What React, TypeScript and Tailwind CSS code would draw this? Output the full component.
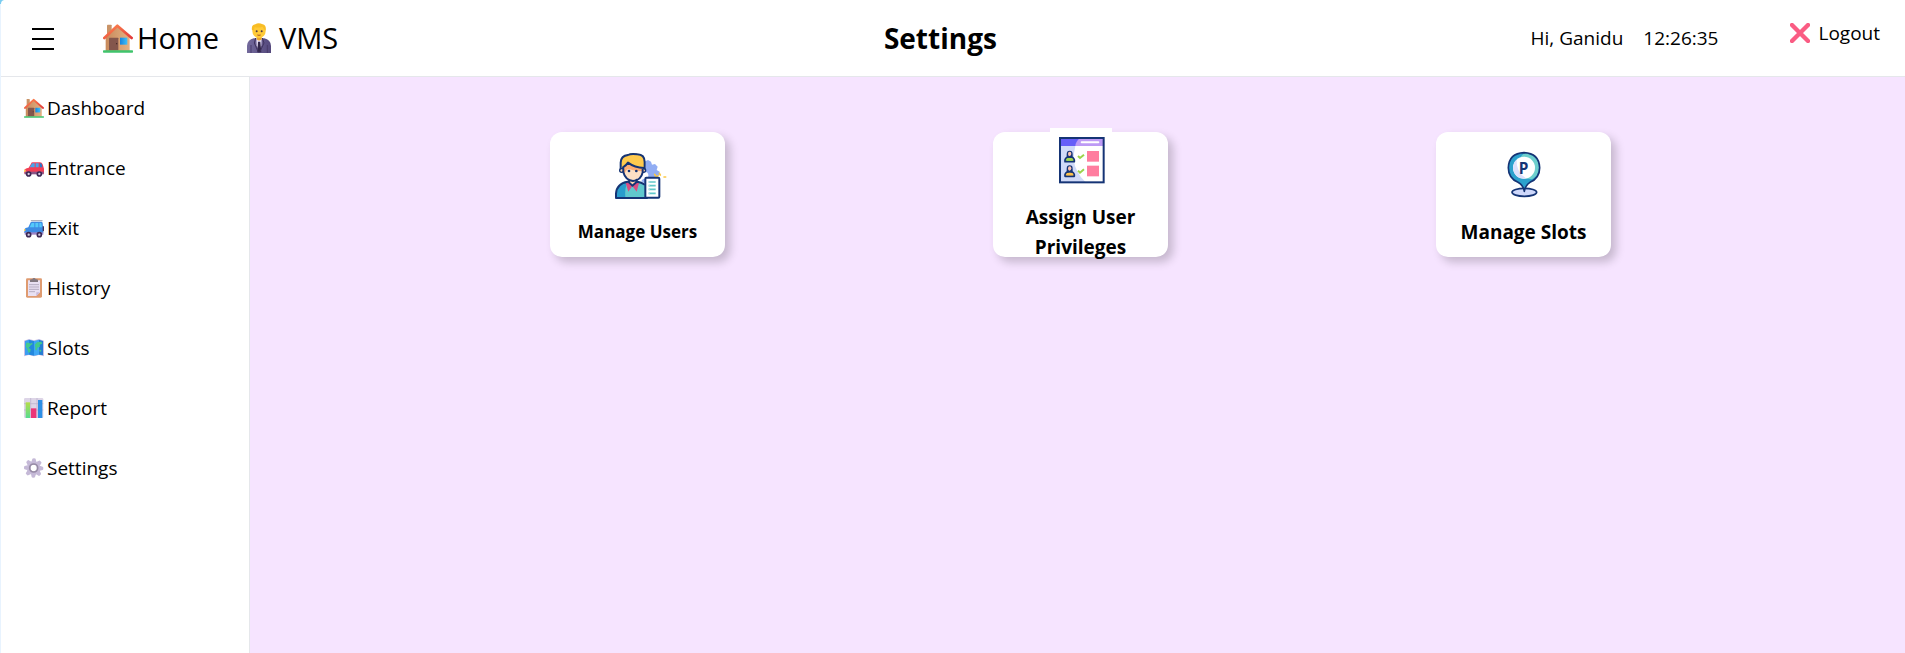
import React from "react";

type IconProps = { className?: string };

function HouseIcon({ className = "size-5" }: IconProps) {
  return (
    <svg viewBox="0 0 90 90" className={className} aria-hidden="true">
      <defs>
        <linearGradient id="wall" x1="0" x2="1">
          <stop offset="0" stopColor="#c88a5c" />
          <stop offset="1" stopColor="#e3b183" />
        </linearGradient>
        <linearGradient id="roof" x1="0" y1="0" x2="1" y2="1">
          <stop offset="0" stopColor="#ff8a50" />
          <stop offset="1" stopColor="#e23a3a" />
        </linearGradient>
        <linearGradient id="pane" x1="0" x2="1">
          <stop offset="0" stopColor="#1583dd" />
          <stop offset="1" stopColor="#3dc0fb" />
        </linearGradient>
      </defs>
      <rect x="12" y="5" width="14" height="30" rx="2" fill="#c99367" />
      <path d="M8 42 43 9l37 33v42H8z" fill="url(#wall)" />
      <rect x="18" y="44" width="28" height="38" rx="2" fill="#84564c" />
      <circle cx="41" cy="62" r="2" fill="#3b2322" />
      <rect x="51" y="44" width="22" height="21" fill="url(#pane)" />
      <path d="M4 45 43 8l43 37" fill="none" stroke="url(#roof)" strokeWidth="8" strokeLinecap="round" strokeLinejoin="round" />
      <rect x="0" y="82" width="90" height="7" rx="2" fill="#3fc46c" />
    </svg>
  );
}

function OfficeWorkerIcon({ className = "" }: IconProps) {
  return (
    <svg viewBox="0 0 72 90" className={className} aria-hidden="true">
      <defs>
        <linearGradient id="suit" x1="0" x2="1">
          <stop offset="0" stopColor="#736a9c" />
          <stop offset="1" stopColor="#54487c" />
        </linearGradient>
      </defs>
      <path d="M0 90V68q2-18 20-22h32q18 4 20 22v22z" fill="url(#suit)" />
      <path d="M28 45h16l-1 22-6 18-8-18z" fill="#e6ddf3" />
      <path d="M33 56h7l3 32H31z" fill="#33284b" />
      <path d="m26 45-4 15 12 28M46 45l5 15-13 28" fill="none" stroke="#40335f" strokeWidth="3" />
      <path d="M12 66v24M61 66v24" stroke="#493c6a" strokeWidth="3" />
      <path d="M29 36h15v13q-8 7-15 0z" fill="#eba52b" />
      <ellipse cx="36" cy="24" rx="20" ry="21" fill="#ffca37" />
      <path d="M15 22Q12 6 25 4q9-7 22 0 12 3 9 19l-5-4-4-8q-15 5-24 1l-2 10z" fill="#f8bd25" />
      <circle cx="29" cy="25" r="3" fill="#513a43" />
      <circle cx="44" cy="25" r="3" fill="#513a43" />
      <path d="M31 36q5 2 10 0" stroke="#a95224" strokeWidth="3" fill="none" />
    </svg>
  );
}

function RedCarIcon() {
  return (
    <svg viewBox="0 0 60 60" className="size-5" aria-hidden="true">
      <path d="M14 29 21 17q1-4 5-4h22q6 0 8 6l4 13v15H1V35q4-5 13-6z" fill="#f33e55" />
      <path d="m17 28 6-10q1-2 3-2h6v12zM35 16h9v12h-9z" fill="#47a6ed" />
      <path d="M47 16h3q4 0 5 12h-8z" fill="#267bcc" />
      <path d="M2 41h57v8H2z" fill="#8b5485" />
      <path d="M0 35h5v6H0z" fill="#ffd35b" />
      <g fill="#d6cbe3" stroke="#3c2853" strokeWidth="5">
        <circle cx="14" cy="48" r="6" />
        <circle cx="46" cy="48" r="6" />
      </g>
    </svg>
  );
}

function BlueCarIcon() {
  return (
    <svg viewBox="0 0 60 60" className="size-5" aria-hidden="true">
      <path d="M22 8h32" stroke="#aeb0bb" strokeWidth="4" strokeLinecap="round" />
      <path d="m13 28 7-15q1-2 4-2h28q3 0 4 4l2 30H1V34q2-5 12-6z" fill="#3e8be3" />
      <path d="m17 28 6-13h8v13zM34 15h9v13h-9zM46 15h6l2 13h-8z" fill="#54c9fa" />
      <path d="M56 25h4v15h-4z" fill="#41355e" />
      <path d="M2 43h56v7H2z" fill="#9c83c5" />
      <path d="M0 33h4v6H0z" fill="#ffd45d" />
      <g fill="#d6cbe3" stroke="#3c2853" strokeWidth="5">
        <circle cx="14" cy="50" r="6" />
        <circle cx="46" cy="50" r="6" />
      </g>
    </svg>
  );
}

function ClipboardIcon() {
  return (
    <svg viewBox="0 0 60 60" className="size-5" aria-hidden="true">
      <rect x="6" y="1" width="48" height="58" rx="4" fill="#df9b70" />
      <path d="M12 7h36v36L37 54H12z" fill="#e9e0f2" />
      <path d="M37 54V43h11z" fill="#c8b8d9" />
      <path d="M18 12V7q0-3 4-3h3q1-4 5-4t5 4h3q4 0 4 3v5z" fill="#81777f" />
      <path d="M15 20h30M15 27h30M15 34h30M15 41h18" stroke="#aca1b8" strokeWidth="2.5" />
    </svg>
  );
}

function MapIcon() {
  return (
    <svg viewBox="0 0 60 60" className="size-5" aria-hidden="true">
      <path d="m0 8 15-5 15 4 15-4 15 5v47l-15-4-15 4-15-4-15 4z" fill="#c9c0e5" />
      <path d="m3 9 12-4v45L3 52z" fill="#3b9df0" />
      <path d="m15 5 15 4v44l-15-3z" fill="#2388df" />
      <path d="m30 9 15-4v45l-15 3z" fill="#3ea7f5" />
      <path d="m45 5 12 4v43l-12-2z" fill="#267ed3" />
      <path d="M7 14h8l3 3 6-3 2 4-6 4-3 5-5 2 8 4-1 8-5 4-3-8-2-6-4-5zM32 20l7-7 13-2 3 6-8 3 1 6-8 3-1 8-5-1v-9z" fill="#43ca8c" />
      <circle cx="49" cy="38" r="3" fill="#43ca8c" />
    </svg>
  );
}

function BarChartIcon() {
  return (
    <svg viewBox="0 0 60 60" className="size-5" aria-hidden="true">
      <defs>
        <linearGradient id="green-bar" x1="0" y1="0" x2="0" y2="1">
          <stop offset="0" stopColor="#b5dd49" />
          <stop offset="1" stopColor="#56dc91" />
        </linearGradient>
      </defs>
      <rect width="58" height="60" rx="4" fill="#ddd5e7" />
      <path d="M20 0v60M39 0v60M0 17h58M0 36h58" stroke="#b9aec8" strokeWidth="2" />
      <rect x="5" y="13" width="13" height="47" fill="url(#green-bar)" />
      <rect x="21" y="31" width="16" height="29" fill="#ec3578" />
      <rect x="42" y="6" width="13" height="54" fill="#2d8fe5" />
    </svg>
  );
}

function GearIcon() {
  const teeth = [0, 45, 90, 135, 180, 225, 270, 315];
  return (
    <svg viewBox="0 0 60 60" className="size-5" aria-hidden="true">
      {teeth.map((angle) => (
        <path key={angle} d="M22 12 25 3q0-2 5-2t5 2l2 9z" fill="#c5b9d7" transform={`rotate(${angle} 29 30)`} />
      ))}
      <circle cx="29" cy="30" r="15" fill="none" stroke="#c5b9d7" strokeWidth="11" />
      <circle cx="29" cy="30" r="12" fill="none" stroke="#978ba5" strokeWidth="5" />
    </svg>
  );
}

function CrossIcon() {
  return (
    <svg viewBox="0 0 60 60" className="size-5" aria-hidden="true">
      <path d="m6 6 48 48M54 6 6 54" stroke="#fa5c83" strokeWidth="13" strokeLinecap="round" />
    </svg>
  );
}

function ManageUsersIcon() {
  return (
    <svg viewBox="0 0 186 186" className="size-[62px] shrink-0 bg-white" aria-hidden="true">
      <path d="m115 52 8-4 9 5 3 9 9-2 8 8-3 10 9 5-1 11-10 4v22h-32l-12-9 8-10-5-12 10-15z" fill="#91adf3" />
      <circle cx="113" cy="94" r="11" fill="#fff" />
      <path d="m143 91 3 5M157 88l3 5M153 95l-4 4M171 99h5" stroke="#fbc947" strokeWidth="5" strokeLinecap="round" />
      <path d="M27 162v-13q2-31 35-36l15-4 14 4q27 3 29 23v26z" fill="#60c8cd" />
      <path d="M27 162v-13q2-31 35-36-10 20-7 49z" fill="#299dcc" />
      <path d="M66 101h21v16l-11 9-10-9z" fill="#fed3ac" />
      <path d="m61 113 15 13-12 17-8-26zM91 113l-15 13 13 17 7-26z" fill="#d94d82" />
      <circle cx="44" cy="79" r="6" fill="#fed3ac" stroke="#153475" strokeWidth="4" />
      <circle cx="110" cy="79" r="6" fill="#fed3ac" stroke="#153475" strokeWidth="4" />
      <path d="M49 66q8-3 14-11 20 14 44 16v13q-4 25-29 27-22-1-29-26z" fill="#fde0c5" />
      <path d="M49 66q8-3 14-11 20 14 44 16v11q-22 0-42-7-9 2-12 15-4-6-4-12z" fill="#ffad74" />
      <path d="M39 72V56q1-24 23-24 9-6 30-3 22 1 22 24v19Q83 72 63 57q-6 10-15 13z" fill="#ffca4e" />
      <path d="M41 74V56q1-21 22-23 9-5 28-2 22 1 22 23v20M48 70q9-5 15-14 20 15 48 16M49 74v11q7 25 29 26 24-2 29-26V73M66 107v8l10 10 12-10v-8M120 162H27v-13q2-31 35-36M91 113q13 2 20 8" fill="none" stroke="#153475" strokeWidth="6" strokeLinecap="round" strokeLinejoin="round" />
      <circle cx="66" cy="81" r="4" fill="#153475" />
      <circle cx="88" cy="81" r="4" fill="#153475" />
      <rect x="115" y="101" width="42" height="60" rx="3" fill="#fff" stroke="#153475" strokeWidth="6" />
      <path d="M125 114h21M125 125h21M125 136h21M125 148h21" stroke="#61c7ca" strokeWidth="5" />
      <path d="M125 114h4M125 125h4M125 136h4M125 148h4" stroke="#a7dde2" strokeWidth="5" />
    </svg>
  );
}

function Privilege({ y, shirt }: { y: number; shirt: string }) {
  return (
    <g transform={`translate(42 ${y})`}>
      <path d="M3 35v-5q2-9 14-10 12 1 14 10v5z" fill={shirt} stroke="#153475" strokeWidth="5" strokeLinejoin="round" />
      <path d="M8 24V12Q8 2 17 2t9 10v12z" fill="#153475" />
      <path d="M12 11q0-6 5-6t5 6-5 7-5-7z" fill="#ffc2b1" />
      <path d="M9 27q8-5 17 0v5H9z" fill={shirt} />
      <path d="m42 18 6 6 12-10" fill="none" stroke="#9bd34b" strokeWidth="6" />
      <rect x="69" y="3" width="36" height="32" fill="#ff7d9f" />
    </g>
  );
}

function PrivilegesIcon() {
  return (
    <svg viewBox="0 0 186 186" className="size-[62px] shrink-0 bg-white" aria-hidden="true">
      <rect x="30" y="30" width="131" height="133" fill="#fff" />
      <path d="M30 54h46q-12 46 6 76 9 19 25 33H30z" fill="#d0daf8" />
      <path d="M30 30h131v24H30z" fill="#bd9af5" />
      <path d="M30 30h60q-13 10-14 24H30z" fill="#665ef8" />
      <path d="M95 43h50" stroke="#fff" strokeWidth="6" strokeLinecap="round" />
      <Privilege y={66} shirt="#a1d750" />
      <Privilege y={110} shirt="#ffc34c" />
      <rect x="30" y="30" width="131" height="133" fill="none" stroke="#153475" strokeWidth="6" />
    </svg>
  );
}

function ParkingPinIcon() {
  return (
    <svg viewBox="0 0 186 186" className="size-[62px] shrink-0 bg-white" aria-hidden="true">
      <ellipse cx="94" cy="148" rx="37" ry="12" fill="#cfd8fb" stroke="#153475" strokeWidth="5" />
      <path d="M94 145q-3-18-19-27-29-13-29-44 2-43 47-45 45 2 47 45 0 31-29 44-14 9-17 27z" fill="#2ca1cd" />
      <path d="M93 31q43 3 45 43-1 23-21 35l-35-5Q62 58 93 31z" fill="#6dcfcd" />
      <path d="M94 145q-3-18-19-27-29-13-29-44 2-43 47-45 45 2 47 45 0 31-29 44-14 9-17 27z" fill="none" stroke="#153475" strokeWidth="5" strokeLinejoin="round" />
      <circle cx="93" cy="74" r="33" fill="#fff" />
      <path d="M71 50q-3 35 28 56-33 5-39-28 0-20 11-28z" fill="#dde1fc" />
      <text x="92" y="92" textAnchor="middle" fill="#153475" className="font-['Open_Sans',sans-serif] text-[46px] font-bold">
        P
      </text>
    </svg>
  );
}

const navItems = [
  { label: "Dashboard", icon: <HouseIcon /> },
  { label: "Entrance", icon: <RedCarIcon /> },
  { label: "Exit", icon: <BlueCarIcon /> },
  { label: "History", icon: <ClipboardIcon /> },
  { label: "Slots", icon: <MapIcon /> },
  { label: "Report", icon: <BarChartIcon /> },
  { label: "Settings", icon: <GearIcon /> },
];

const cards = [
  { label: "Manage Users", icon: <ManageUsersIcon />, text: "text-[17px] leading-[27px]" },
  { label: "Assign User Privileges", icon: <PrivilegesIcon />, text: "text-[19px] leading-[30px]" },
  { label: "Manage Slots", icon: <ParkingPinIcon />, text: "text-[19px] leading-[30px]" },
];

export default function App() {
  return (
    <div className="relative flex min-h-screen flex-col bg-[#e8f3fe] pl-px font-['Open_Sans','Noto_Sans',sans-serif] text-[19px] text-black">
      <div className="absolute top-0 left-0 size-1 bg-[#7accf0]" />
      <header className="relative flex h-[77px] items-center justify-between rounded-tl border-b border-gray-200 bg-white pr-[25px] pl-[30px]">
        <div className="flex items-center text-[29px]">
          <button type="button" aria-label="Toggle menu" className="flex size-6 items-center justify-center">
            <svg viewBox="0 0 24 24" className="size-6" aria-hidden="true">
              <path d="M1 2h22v2H1zM1 12h22v2H1zM1 22h22v2H1z" fill="#000" />
            </svg>
          </button>
          <a href="#home" className="ml-12 flex items-center gap-1">
            <HouseIcon className="size-[30px]" />
            Home
          </a>
          <a href="#vms" className="ml-7 flex items-center gap-2">
            <OfficeWorkerIcon className="h-[30px] w-6" />
            VMS
          </a>
        </div>
        <h1 className="pl-3 text-[28px] font-bold">Settings</h1>
        <div className="flex items-center">
          <span>Hi, Ganidu</span>
          <time className="ml-5">12:26:35</time>
          <button type="button" className="mb-2.5 ml-[72px] flex items-center gap-2">
            <CrossIcon />
            Logout
          </button>
        </div>
      </header>
      <div className="flex grow">
        <nav className="w-[249px] shrink-0 border-r border-gray-200 bg-white">
          <ul>
            {navItems.map((item) => (
              <li key={item.label}>
                <a href={`#${item.label.toLowerCase()}`} className="flex h-[60px] items-center gap-[3px] pt-0.5 pl-[23px]">
                  {item.icon}
                  {item.label}
                </a>
              </li>
            ))}
          </ul>
        </nav>
        <main className="grow bg-[#f6e4ff] pt-[55px] pr-40 pl-[166px]">
          <div className="grid grid-cols-3 justify-items-center">
            {cards.map((card) => (
              <button
                key={card.label}
                type="button"
                className="flex h-[125px] w-[175px] flex-col items-center justify-center gap-3 rounded-xl bg-white px-5 shadow-[5px_5px_10px_rgba(0,0,0,0.2)]"
              >
                {card.icon}
                <span className={`font-bold ${card.text}`}>{card.label}</span>
              </button>
            ))}
          </div>
        </main>
      </div>
    </div>
  );
}
